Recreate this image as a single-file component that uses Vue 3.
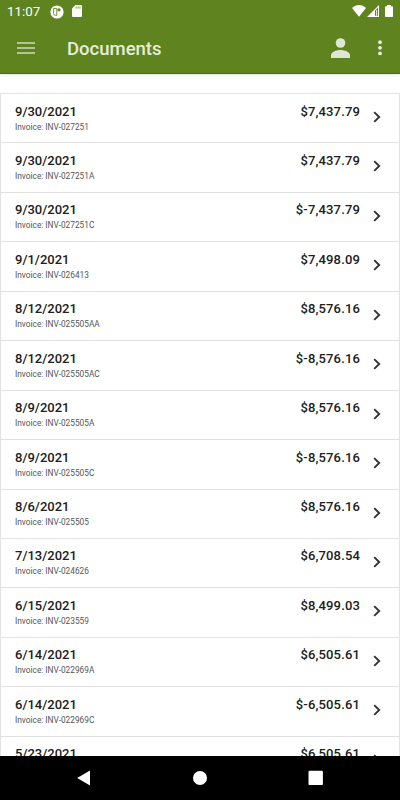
<template>
  <div class="screen">
    <header class="header">
      <div class="status-bar">
        <span class="time">11:07</span>
        <svg class="app-icon" viewBox="0 0 14 14">
          <circle cx="7" cy="7" r="6.6" fill="#fff" />
          <path d="M3.6 3.4H6.8V10.4H5.6A2 2 0 0 1 3.6 8.4Z" fill="none" stroke="#5e831f" stroke-width="0.9" />
          <circle cx="9" cy="4.8" r="1.6" fill="#5e831f" />
        </svg>
        <svg class="sd-icon" viewBox="0 0 10 12">
          <path d="M3.4 0H9a1 1 0 0 1 1 1V11a1 1 0 0 1-1 1H1a1 1 0 0 1-1-1V3.6Z" fill="#fff" />
          <path d="M4.2 1.5V3.6M6.1 1.5V3.6M8 1.5V3.6" stroke="#5e831f" stroke-width="0.8" />
        </svg>
        <div class="status-right">
          <svg class="wifi-icon" viewBox="0 0 14 12">
            <path d="M0 3.1C4-.9 10-.9 14 3.1L7 11.7Z" fill="#fff" />
          </svg>
          <svg class="signal-icon" viewBox="0 0 12 12">
            <path d="M0 12L12 0V12Z" fill="#fff" />
            <path d="M8 5.4L11 2.4V10.8H8Z" fill="#5e831f" />
            <path d="M9.6 4.8V10.8" stroke="#fff" stroke-width="0.9" />
          </svg>
          <svg class="battery-icon" viewBox="0 0 8 12">
            <path d="M2 0H6V1.2H7.2Q8 1.2 8 2V11.2Q8 12 7.2 12H.8Q0 12 0 11.2V2Q0 1.2.8 1.2H2Z" fill="#fff" />
          </svg>
        </div>
      </div>
      <div class="toolbar">
        <button class="menu-btn" aria-label="Menu">
          <span></span>
          <span></span>
          <span></span>
        </button>
        <h1>Documents</h1>
        <svg class="user-icon" viewBox="0 0 19 20">
          <circle cx="9.5" cy="5" r="4.8" />
          <path d="M0 20V17.4C0 14.2 5 12.1 9.5 12.1S19 14.2 19 17.4V20Z" />
        </svg>
        <svg class="more-icon" viewBox="0 0 4 16">
          <circle cx="2" cy="2.2" r="1.9" />
          <circle cx="2" cy="7.8" r="1.9" />
          <circle cx="2" cy="13.4" r="1.9" />
        </svg>
      </div>
    </header>

    <main class="content">
      <ul class="documents">
        <li v-for="(doc, index) in documents" :key="index">
          <div class="info">
            <div class="date">{{ doc.date }}</div>
            <div v-if="doc.invoice" class="invoice">Invoice: {{ doc.invoice }}</div>
          </div>
          <div class="amount">${{ doc.amount }}</div>
          <svg class="chevron" viewBox="0 0 8 12">
            <path d="M1.2 1.1L6.2 6L1.2 10.9" />
          </svg>
        </li>
      </ul>
    </main>

    <nav class="nav-bar">
      <svg viewBox="0 0 16 16"><path d="M14 .6V15.4L1.2 8Z" /></svg>
      <svg viewBox="0 0 16 16"><circle cx="8" cy="8" r="7" /></svg>
      <svg viewBox="0 0 16 16"><rect x=".5" y=".7" width="14.4" height="14.4" rx="1.2" /></svg>
    </nav>
  </div>
</template>

<script setup>
import { ref } from 'vue';

const documents = ref([
  { date: '9/30/2021', invoice: 'INV-027251', amount: '7,437.79' },
  { date: '9/30/2021', invoice: 'INV-027251A', amount: '7,437.79' },
  { date: '9/30/2021', invoice: 'INV-027251C', amount: '-7,437.79' },
  { date: '9/1/2021', invoice: 'INV-026413', amount: '7,498.09' },
  { date: '8/12/2021', invoice: 'INV-025505AA', amount: '8,576.16' },
  { date: '8/12/2021', invoice: 'INV-025505AC', amount: '-8,576.16' },
  { date: '8/9/2021', invoice: 'INV-025505A', amount: '8,576.16' },
  { date: '8/9/2021', invoice: 'INV-025505C', amount: '-8,576.16' },
  { date: '8/6/2021', invoice: 'INV-025505', amount: '8,576.16' },
  { date: '7/13/2021', invoice: 'INV-024626', amount: '6,708.54' },
  { date: '6/15/2021', invoice: 'INV-023559', amount: '8,499.03' },
  { date: '6/14/2021', invoice: 'INV-022969A', amount: '6,505.61' },
  { date: '6/14/2021', invoice: 'INV-022969C', amount: '-6,505.61' },
  { date: '5/23/2021', amount: '6,505.61' }
]);
</script>

<style>
body {
  margin: 0;
}
</style>

<style scoped>
.screen {
  display: flex;
  flex-direction: column;
  width: 400px;
  height: 800px;
  overflow: hidden;
  background: #fff;
  font-family: Roboto, sans-serif;
}
svg {
  display: block;
  flex: none;
}
.header {
  flex: none;
  box-sizing: border-box;
  height: 74px;
  background: #5e831f;
  border-bottom: 1px solid #3f700c;
  box-shadow: 0 1px 3px rgba(0, 0, 0, 0.12);
}
.status-bar {
  display: flex;
  align-items: center;
  height: 23px;
  padding: 0 7px 0 7px;
  color: #fff;
}
.time {
  width: 43px;
  font-size: 13.3px;
  line-height: 23px;
}
.app-icon {
  width: 14px;
  height: 14px;
}
.sd-icon {
  width: 10px;
  height: 12px;
  margin: -1px 0 0 8px;
}
.status-right {
  display: flex;
  margin-left: auto;
  margin-top: -1px;
}
.wifi-icon {
  width: 14px;
  height: 12px;
}
.signal-icon {
  width: 12px;
  height: 12px;
  margin-left: 1px;
}
.battery-icon {
  width: 8px;
  height: 12px;
  margin-left: 6px;
}
.toolbar {
  display: flex;
  align-items: center;
  height: 50px;
  padding: 0 18px 0 17px;
}
.menu-btn {
  display: flex;
  flex-direction: column;
  gap: 3px;
  width: 18px;
  padding: 0;
  border: 0;
  background: none;
}
.menu-btn span {
  height: 2px;
  background: #b4c593;
}
h1 {
  flex: 1;
  margin: 2px 0 0 32px;
  color: #e7eddd;
  font-size: 18.5px;
  font-weight: 500;
  line-height: 24px;
}
.user-icon {
  width: 19px;
  height: 20px;
  fill: #dfe6d2;
}
.more-icon {
  width: 4px;
  height: 16px;
  margin-left: 28px;
  fill: #e7eddd;
}
.content {
  flex: 1;
  min-height: 0;
  overflow: hidden;
  padding-top: 19px;
}
.documents {
  margin: 0;
  padding: 0;
  list-style: none;
  border: 1px solid #e2e2e2;
}
.documents li {
  display: flex;
  box-sizing: border-box;
  height: 49.45px;
  padding: 8.5px 18px 0 14px;
  border-bottom: 1px solid #e2e2e2;
  color: #202020;
}
.info {
  flex: 1;
}
.date,
.amount {
  font-size: 13px;
  font-weight: 500;
  line-height: 17px;
}
.amount {
  letter-spacing: 0.15px;
}
.invoice {
  margin-top: 2px;
  color: #555;
  font-size: 8.3px;
  line-height: 11px;
}
.chevron {
  width: 8px;
  height: 12px;
  margin: 8.5px 0 0 13px;
  fill: none;
  stroke: #333;
  stroke-width: 1.9;
}
.nav-bar {
  display: flex;
  flex: none;
  align-items: center;
  justify-content: space-between;
  box-sizing: border-box;
  height: 44px;
  padding: 0 76px;
  background: #000;
}
.nav-bar svg {
  width: 16px;
  height: 16px;
  fill: #fff;
}
</style>
